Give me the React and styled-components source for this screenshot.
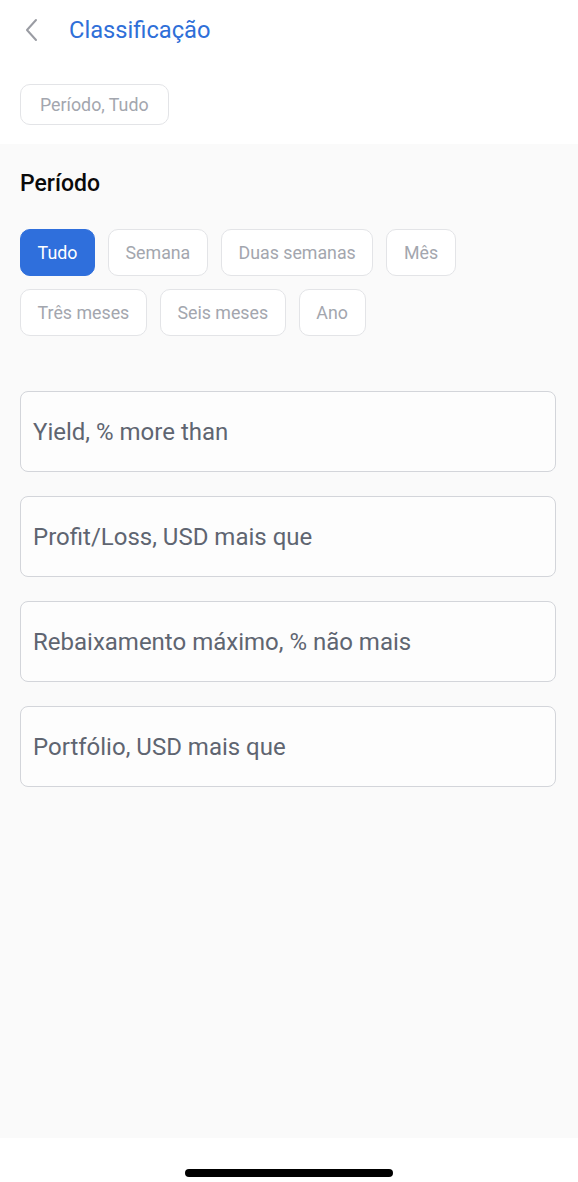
import React from "react";
import styled, { createGlobalStyle } from "styled-components";

const Global = createGlobalStyle`
  html, body { margin: 0; padding: 0; background: #ffffff; }
  body { font-family: Roboto, "Noto Sans", Arial, sans-serif; -webkit-font-smoothing: antialiased; }
  * { box-sizing: border-box; }
`;

const Page = styled.div`
  width: 578px;
  height: 1182px;
  display: flex;
  flex-direction: column;
  background: #ffffff;
`;

const Header = styled.header`
  height: 60px;
  display: flex;
  align-items: center;
  padding-left: 22px;
  gap: 29px;
`;

const BackButton = styled.button`
  border: none;
  background: none;
  padding: 0;
  width: 18px;
  height: 24px;
  display: flex;
  align-items: center;
  justify-content: center;
  cursor: pointer;
`;

const Title = styled.h1`
  margin: 0;
  font-size: 23.7px;
  font-weight: 400;
  color: #2f6fd8;
`;

const SummaryBar = styled.div`
  padding: 24px 20px 19px;
  display: flex;
`;

const Chip = styled.button`
  font-family: inherit;
  height: ${(p) => p.$h || 47}px;
  padding: 0 ${(p) => p.$px || 16.6}px;
  border-radius: 10px;
  font-size: 17.8px;
  border: 1.5px solid ${(p) => (p.$active ? "#2f6fdc" : "#e3e4e7")};
  background: ${(p) => (p.$active ? "#2f6fdc" : "#ffffff")};
  color: ${(p) => (p.$active ? "#ffffff" : "#a3a6ae")};
  display: inline-flex;
  align-items: center;
  justify-content: center;
  cursor: pointer;
`;

const Body = styled.main`
  flex: 1;
  background: #fafafa;
  padding: 27px 22px 0 20px;
  display: flex;
  flex-direction: column;
`;

const SectionTitle = styled.h2`
  margin: 0;
  font-size: 23px;
  font-weight: 500;
  color: #0a0a0a;
  line-height: 26px;
`;

const ChipGrid = styled.div`
  margin-top: 32px;
  display: flex;
  flex-wrap: wrap;
  gap: 13px;
  width: 450px;
`;

const Fields = styled.div`
  margin-top: 55px;
  display: flex;
  flex-direction: column;
  gap: 24px;
`;

const Field = styled.div`
  height: 81px;
  border: 1.5px solid #d3d5da;
  border-radius: 8px;
  background: #fdfdfd;
  display: flex;
  align-items: center;
  padding-left: 12px;
  font-size: 24px;
  color: #5f6571;
`;

const Footer = styled.div`
  height: 44px;
  background: #ffffff;
  display: flex;
  justify-content: center;
  padding-top: 31px;
`;

const HomeIndicator = styled.div`
  width: 208px;
  height: 8px;
  border-radius: 4px;
  background: #000000;
`;

const periods = ["Tudo", "Semana", "Duas semanas", "Mês", "Três meses", "Seis meses", "Ano"];
const fields = [
  "Yield, % more than",
  "Profit/Loss, USD mais que",
  "Rebaixamento máximo, % não mais",
  "Portfólio, USD mais que",
];

export default function App() {
  return (
    <Page>
      <Global />
      <Header>
        <BackButton aria-label="Voltar">
          <svg width="14" height="24" viewBox="0 0 14 24" fill="none">
            <path d="M12 2 L3 12 L12 22" stroke="#9a9ca3" strokeWidth="2" strokeLinecap="round" strokeLinejoin="round" />
          </svg>
        </BackButton>
        <Title>Classificação</Title>
      </Header>
      <SummaryBar>
        <Chip $h={41} $px={19}>Período, Tudo</Chip>
      </SummaryBar>
      <Body>
        <SectionTitle>Período</SectionTitle>
        <ChipGrid>
          {periods.map((p, i) => (
            <Chip key={p} $active={i === 0}>{p}</Chip>
          ))}
        </ChipGrid>
        <Fields>
          {fields.map((f) => (
            <Field key={f}>{f}</Field>
          ))}
        </Fields>
      </Body>
      <Footer>
        <HomeIndicator />
      </Footer>
    </Page>
  );
}
